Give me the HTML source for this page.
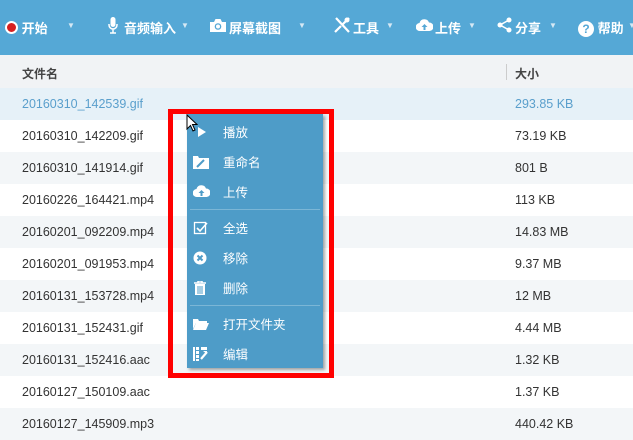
<!DOCTYPE html><html><head><meta charset="utf-8"><style>
body{margin:0;width:633px;height:439px;overflow:hidden;font-family:"Liberation Sans","Noto Sans CJK SC",sans-serif;background:#fff;position:relative}
.tb{position:absolute;left:0;top:0;width:633px;height:55px;background:#55a8d6;color:#fff;font-size:13px;font-weight:bold}
.tb span{position:absolute;top:18px;white-space:nowrap}
.tb svg{position:absolute;top:17px}
.ar{font-size:8px;font-weight:normal;top:21px!important;color:#d5e8f4}
.hd{position:absolute;top:55px;left:0;width:633px;height:33px;background:#f1f3f5;border-bottom:1px solid #e0e6ea;font-size:12px;color:#444;font-weight:bold}
.row{position:absolute;left:0;width:633px;height:32px;font-size:12.5px;color:#333;line-height:32px}
.row .n{position:absolute;left:22px}.row .s{position:absolute;left:515px}
.menu{position:absolute;left:187px;top:114px;width:136px;height:254px;background:#4e9cc8;box-shadow:2px 2px 3px rgba(0,0,0,.35);color:#fff;font-size:12.5px}
.it{position:absolute;left:0;width:136px;height:16px}
.mi{position:absolute;left:36px;top:0}
.it svg{position:absolute;left:6px;top:3px}
.sep{position:absolute;left:3px;width:130px;height:1px;background:#7bb6d6}
</style></head><body>
<div class="tb">
<span style="left:5px"><span style="position:relative;display:inline-block;width:9px;height:9px;border-radius:50%;background:#d62020;border:2px solid #fff;top:1px"></span> 开始</span><span class="ar" style="left:67px">▼</span>
<svg style="left:108px" width="10" height="18" viewBox="0 0 10 18"><rect x="2.5" y="0" width="5" height="10" rx="2.5" fill="#fff"/><path d="M1 7v1a4 4 0 0 0 8 0V7M5 12v4M2 16h6" stroke="#fff" stroke-width="1.5" fill="none"/></svg>
<span style="left:124px">音频输入</span><span class="ar" style="left:181px">▼</span>
<svg style="left:210px;top:19px" width="16" height="13" viewBox="0 0 16 13"><path d="M0 3h4l1.5-3h5L12 3h4v10H0z" fill="#fff"/><circle cx="8" cy="7.5" r="3.3" fill="#55a8d6"/><circle cx="8" cy="7.5" r="2" fill="#fff"/></svg>
<span style="left:229px">屏幕截图</span><span class="ar" style="left:298px">▼</span>
<svg style="left:334px" width="16" height="16" viewBox="0 0 16 16"><path d="M2 1l13 14M15 1L9 7M1 15l6-6" stroke="#fff" stroke-width="2.2" fill="none"/><circle cx="13" cy="3" r="2.5" fill="#fff"/></svg>
<span style="left:353px">工具</span><span class="ar" style="left:386px">▼</span>
<svg style="left:416px;top:19px" width="17" height="12" viewBox="0 0 17 12"><path d="M4 12a4 4 0 0 1-.5-8A5 5 0 0 1 13 3.5 4.2 4.2 0 0 1 13.5 12z" fill="#fff"/><path d="M8.5 5l-3 3h2v3h2V8h2z" fill="#55a8d6"/></svg>
<span style="left:435px">上传</span><span class="ar" style="left:468px">▼</span>
<svg style="left:497px" width="15" height="16" viewBox="0 0 15 16"><path d="M12 3L3 8l9 5" stroke="#fff" stroke-width="1.5" fill="none"/><circle cx="12" cy="3" r="2.5" fill="#fff"/><circle cx="3" cy="8" r="2.5" fill="#fff"/><circle cx="12" cy="13" r="2.5" fill="#fff"/></svg>
<span style="left:515px">分享</span><span class="ar" style="left:549px">▼</span>
<span style="left:578px"><span style="position:relative;display:inline-block;width:16px;height:16px;border-radius:50%;background:#fff;color:#55a8d6;text-align:center;line-height:16px;font-size:12px;top:0">?</span> 帮助</span><span class="ar" style="left:628px">▼</span>
</div>
<div class="hd"><span style="position:absolute;left:22px;top:10px">文件名</span><div style="position:absolute;left:506px;top:9px;width:1px;height:16px;background:#ccc"></div><span style="position:absolute;left:515px;top:10px">大小</span></div>
<div class="row" style="top:88px;background:#e6f1f8;color:#5a9fcc"><span class="n">20160310_142539.gif</span><span class="s">293.85 KB</span></div>
<div class="row" style="top:120px"><span class="n">20160310_142209.gif</span><span class="s">73.19 KB</span></div>
<div class="row" style="top:152px;background:#f3f6f8"><span class="n">20160310_141914.gif</span><span class="s">801 B</span></div>
<div class="row" style="top:184px"><span class="n">20160226_164421.mp4</span><span class="s">113 KB</span></div>
<div class="row" style="top:216px;background:#f3f6f8"><span class="n">20160201_092209.mp4</span><span class="s">14.83 MB</span></div>
<div class="row" style="top:248px"><span class="n">20160201_091953.mp4</span><span class="s">9.37 MB</span></div>
<div class="row" style="top:280px;background:#f3f6f8"><span class="n">20160131_153728.mp4</span><span class="s">12 MB</span></div>
<div class="row" style="top:312px"><span class="n">20160131_152431.gif</span><span class="s">4.44 MB</span></div>
<div class="row" style="top:344px;background:#f3f6f8"><span class="n">20160131_152416.aac</span><span class="s">1.32 KB</span></div>
<div class="row" style="top:376px"><span class="n">20160127_150109.aac</span><span class="s">1.37 KB</span></div>
<div class="row" style="top:408px;background:#f3f6f8"><span class="n">20160127_145909.mp3</span><span class="s">440.42 KB</span></div>
<div style="position:absolute;left:168px;top:109px;width:156px;height:259px;border:5px solid #f00"></div>
<div class="menu">
<div class="it" style="top:8px"><svg width="16" height="14"><path d="M5 2l8 5-8 5z" fill="#fff"/></svg><span class="mi">播放</span></div>
<div class="it" style="top:38px"><svg width="16" height="14"><path d="M0 1h5l1 2h10v11H0z" fill="#fff"/><path d="M4 12l7-7" stroke="#4e9cc8" stroke-width="2"/></svg><span class="mi">重命名</span></div>
<div class="it" style="top:68px"><svg width="17" height="14"><path d="M4 12a4 4 0 0 1-.5-8A5 5 0 0 1 13 3.5 4.2 4.2 0 0 1 13.5 12z" fill="#fff"/><path d="M8.5 5l-3 3h2v3h2V8h2z" fill="#4e9cc8"/></svg><span class="mi">上传</span></div>
<div class="sep" style="top:95px"></div>
<div class="it" style="top:104px"><svg width="16" height="14"><rect x="1.5" y="1.5" width="11" height="11" fill="none" stroke="#fff" stroke-width="1.3"/><path d="M4 7l3 3 7-8" stroke="#fff" stroke-width="1.6" fill="none"/></svg><span class="mi">全选</span></div>
<div class="it" style="top:134px"><svg width="16" height="14"><circle cx="7" cy="7" r="6.5" fill="#fff"/><path d="M4.5 4.5l5 5M9.5 4.5l-5 5" stroke="#4e9cc8" stroke-width="2"/></svg><span class="mi">移除</span></div>
<div class="it" style="top:164px"><svg width="16" height="14"><path d="M1 2h12M5 2V0h4v2" stroke="#fff" stroke-width="1.5" fill="none"/><path d="M2 3h10v11H2z" fill="#fff"/><path d="M5 5v8M7 5v8M9 5v8" stroke="#4e9cc8" stroke-width="1"/></svg><span class="mi">删除</span></div>
<div class="sep" style="top:191px"></div>
<div class="it" style="top:200px"><svg width="16" height="14"><path d="M0 2h5l1 2h8v2H3L0 12z" fill="#fff"/><path d="M3 6h13l-3 7H0z" fill="#fff"/></svg><span class="mi">打开文件夹</span></div>
<div class="it" style="top:230px"><svg width="16" height="14"><path d="M0 0h2v14H0zM3 0h3v3H3zM3 4h3v3H3zM3 8h3v3H3zM3 12h3v2H3zM8 0h6v3H8z" fill="#fff"/><path d="M8 12l6-7" stroke="#fff" stroke-width="2.2"/><path d="M10 4h4v3" fill="#fff"/></svg><span class="mi">编辑</span></div>
</div>
<svg style="position:absolute;left:186px;top:114px" width="12" height="18" viewBox="0 0 12 18"><path d="M1 1v14l3.5-3.5 2.5 5.5 2-1-2.5-5.5H11z" fill="#fff" stroke="#000" stroke-width="1"/></svg>
</body></html>
